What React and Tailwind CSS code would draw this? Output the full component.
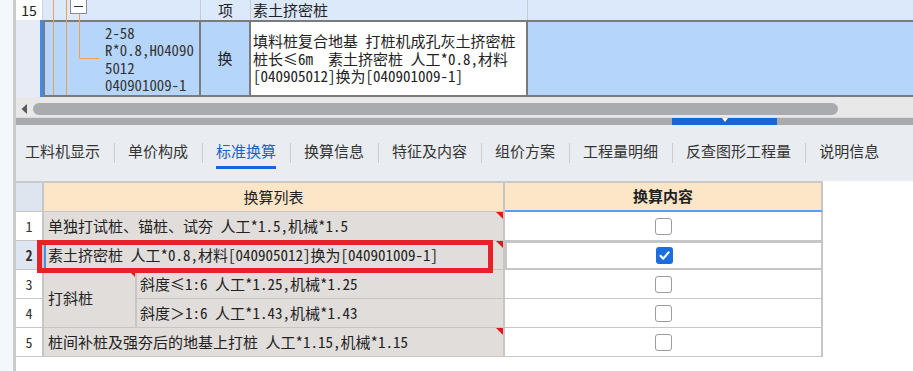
import React from "react";

const mono = "font-['Noto_Sans_Mono_CJK_SC','Noto_Sans_CJK_SC',monospace]";
const sans = "font-['Noto_Sans_CJK_SC','Noto_Sans',sans-serif]";

const tabs = ["工料机显示", "单价构成", "标准换算", "换算信息", "特征及内容", "组价方案", "工程量明细", "反查图形工程量", "说明信息"];

function Flag() {
  return <span className="absolute top-0 right-0 w-0 h-0 border-t-[7px] border-t-[#e8141c] border-l-[7px] border-l-transparent" />;
}

function Check({ on }) {
  if (on) {
    return (
      <span className="w-[17px] h-[17px] rounded-[3px] bg-[#1a6ee0] flex items-center justify-center">
        <svg width="11" height="11" viewBox="0 0 11 11">
          <path d="M1.5 5.8 L4.3 8.6 L9.6 2.4" fill="none" stroke="white" strokeWidth="2.2" strokeLinecap="round" strokeLinejoin="round" />
        </svg>
      </span>
    );
  }
  return <span className="w-[17px] h-[17px] rounded-[3px] border-[1.5px] border-[#9c9c9c] bg-white" />;
}

function CheckCell({ on, sel }) {
  return (
    <div className={"flex items-center justify-center bg-white border-r-2 border-[#c6c6c6] " + (sel ? "border-2 border-[#5b9cf2]" : "border-b")}>
      <Check on={on} />
    </div>
  );
}

function Num({ n, sel }) {
  return (
    <div className={"flex items-center justify-center border-r-2 border-b border-[#c6c6c6] text-[14px] text-[#333] " + mono + (sel ? " bg-[#dfe6f3] font-bold" : " bg-white")}>
      {n}
    </div>
  );
}

export default function App() {
  return (
    <div className={"w-[913px] h-[371px] overflow-hidden flex bg-white text-[#222] " + sans}>
      <div className="w-[13px] bg-[#f2f8fc]" />
      <div className="w-[3px] bg-[#cbcbcb]" />
      <div className="flex-1 flex flex-col min-w-0">
        {/* upper grid */}
        <div className="relative h-[97px] flex flex-col">
          <div className="flex h-[20px] text-[15px] leading-[18px]">
            <div className={"w-[26px] bg-white flex items-center justify-center text-[14px] " + sans}>15</div>
            <div className="w-[158px] bg-[#dce9fb] border-l border-[#c9d4e2]" />
            <div className="w-[50px] bg-[#dce9fb] border-l border-[#c3ccd8] flex items-center justify-center">项</div>
            <div className={"w-[277px] bg-[#dce9fb] border-l border-[#c3ccd8] pl-[2px] flex items-center " + mono}>素土挤密桩</div>
            <div className="flex-1 bg-[#dce9fb] border-l border-[#c3ccd8]" />
          </div>
          <div className="flex h-[77px]">
            <div className="w-[24px] bg-[#e6ebf5]" />
            <div className="w-[3px] bg-[#3c8cf0]" />
            <div className="flex-1 flex border-y-2 border-l-2 border-[#7b7b7b]">
              <div className={"w-[154px] bg-[#b5d5fb] flex flex-col justify-center pl-[60px] text-[14.8px] leading-[17.5px] text-[#333] " + mono}>
                <span>2-58</span>
                <span>R*0.8,H04090</span>
                <span>5012</span>
                <span>040901009-1</span>
              </div>
              <div className="w-[52px] bg-[#b5d5fb] border-x-2 border-[#7b7b7b] flex items-center justify-center text-[15px]">换</div>
              <div className={"w-[275px] bg-white flex flex-col justify-center pl-[2px] text-[15px] leading-[17.5px] whitespace-pre " + mono}>
                <span>填料桩复合地基 打桩机成孔灰土挤密桩</span>
                <span>桩长≤6m  素土挤密桩 人工*0.8,材料</span>
                <span>[040905012]换为[040901009-1]</span>
              </div>
              <div className="flex-1 bg-[#b5d5fb] border-l-2 border-[#7b7b7b]" />
            </div>
          </div>
          <svg className="absolute left-0 top-0 pointer-events-none" width="120" height="97" viewBox="0 0 120 97">
            <line x1="37.5" y1="0" x2="37.5" y2="95" stroke="#f0a24a" strokeWidth="1" />
            <line x1="50.5" y1="0" x2="50.5" y2="95" stroke="#f0a24a" strokeWidth="1" />
            <path d="M63.5 14 V58.5 H83" fill="none" stroke="#f0a24a" strokeWidth="1" />
            <rect x="54.5" y="-1.5" width="16" height="15" fill="white" stroke="#8d8d8d" strokeWidth="1" />
            <line x1="58" y1="6.5" x2="67" y2="6.5" stroke="#333" strokeWidth="1" />
          </svg>
        </div>

        {/* horizontal scrollbar */}
        <div className="h-[20px] bg-[#e8e8e8] flex items-start pt-[6px]">
          <svg className="ml-[5px] mt-[1px]" width="7" height="10" viewBox="0 0 7 10">
            <path d="M6 0 L0.5 5 L6 10 Z" fill="#5a5a5a" />
          </svg>
          <div className="ml-[5px] w-[805px] h-[12px] rounded-full bg-[#a9abae]" />
        </div>
        <div className="h-[1px] bg-[#dcdcdc]" />
        <div className="h-[7px] bg-[#a8aaad] flex">
          <div className="w-[656px]" />
          <div className="w-[105px] bg-[#1c63d6] flex justify-center">
            <svg width="6" height="4" viewBox="0 0 6 4">
              <path d="M0 0 H6 L3 4 Z" fill="white" />
            </svg>
          </div>
        </div>

        {/* tabs */}
        <div className="h-[56px] bg-[#e9ecf0] flex items-start pl-[9px] pt-[16px]">
          {tabs.map((t, i) => (
            <div key={t} className="flex items-start">
              {i > 0 && <div className="mx-[13.5px] mt-[2px] w-[1px] h-[20px] bg-[#c9ccd1]" />}
              <div className="flex flex-col">
                <span className={"text-[15px] leading-[20px] whitespace-nowrap " + (t === "标准换算" ? "text-[#1f5fc4]" : "text-[#333]")}>{t}</span>
                {t === "标准换算" && <span className="mt-[5px] h-[3px] bg-[#1b62d8]" />}
              </div>
            </div>
          ))}
        </div>

        {/* conversion table */}
        <div className="flex-1 bg-white">
          <div className="relative w-[807px] border-t-2 border-[#c9c9c9]">
            <div className="grid grid-cols-[28px_93px_368px_318px] grid-rows-[29px_29px_29px_29px_29px_29px] text-[15px]">
              <div className="bg-[#dfe5ee] border-r-2 border-b border-[#c6c6c6]" />
              <div className="col-span-2 bg-[#fde6c8] border-r-2 border-b border-[#c6c6c6] flex items-center justify-center">换算列表</div>
              <div className="bg-[#fde6c8] border-r-2 border-b-2 border-r-[#c6c6c6] border-b-[#5b9cf2] flex items-center justify-center font-bold">换算内容</div>

              <Num n="1" />
              <div className={"relative col-span-2 bg-[#e1dddb] border-r-2 border-b border-[#c6c6c6] flex items-center pl-[4px] whitespace-pre " + mono}>
                单独打试桩、锚桩、试夯 人工*1.5,机械*1.5
                <Flag />
              </div>
              <CheckCell />

              <Num n="2" sel />
              <div className={"relative col-span-2 bg-[#e1dddb] border-r-2 border-b border-[#c6c6c6] flex items-center pl-[4px] whitespace-pre " + mono}>
                <span className="absolute left-0 top-[1px] bottom-[1px] w-[2px] bg-[#4a90e2]" />
                素土挤密桩 人工*0.8,材料[040905012]换为[040901009-1]
                <Flag />
              </div>
              <CheckCell on sel />

              <Num n="3" />
              <div className="relative row-span-2 bg-[#e1dddb] border-r-2 border-b border-[#c6c6c6] flex items-center pl-[4px]">
                打斜桩
                <Flag />
              </div>
              <div className={"bg-[#e1dddb] border-r-2 border-b border-[#c6c6c6] flex items-center pl-[3px] whitespace-pre " + mono}>
                斜度≤1:6 人工*1.25,机械*1.25
              </div>
              <CheckCell />

              <Num n="4" />
              <div className={"bg-[#e1dddb] border-r-2 border-b border-[#c6c6c6] flex items-center pl-[3px] whitespace-pre " + mono}>
                斜度＞1:6 人工*1.43,机械*1.43
              </div>
              <CheckCell />

              <Num n="5" />
              <div className={"relative col-span-2 bg-[#e1dddb] border-r-2 border-b border-[#c6c6c6] flex items-center pl-[4px] whitespace-pre " + mono}>
                桩间补桩及强夯后的地基上打桩 人工*1.15,机械*1.15
                <Flag />
              </div>
              <CheckCell />
            </div>
            <div className="absolute left-[21px] top-[57px] w-[456px] h-[33px] border-[5px] border-[#e8202a] pointer-events-none" />
          </div>
        </div>
      </div>
    </div>
  );
}
